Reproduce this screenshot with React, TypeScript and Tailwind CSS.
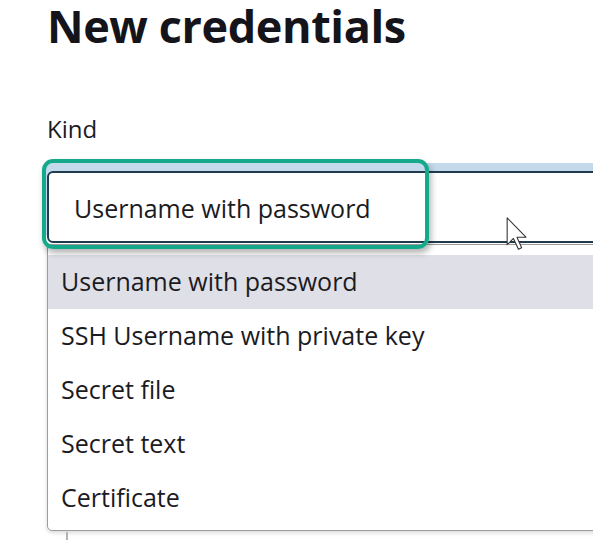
const options = [
  "Username with password",
  "SSH Username with private key",
  "Secret file",
  "Secret text",
  "Certificate",
];

export default function App() {
  return (
    <div
      className="relative h-[540px] w-[593px] overflow-hidden bg-white text-[#1b1b1f]"
      style={{ fontFamily: '"Open Sans", "Noto Sans", sans-serif' }}
    >
      <div className="pl-[47px] pt-[1px]">
        <h1 className="text-[45px] font-bold leading-[1.1] tracking-[-0.4px] text-[#14141a]">
          New credentials
        </h1>
        <label className="mt-[66px] block text-[24px] leading-none">Kind</label>
      </div>

      {/* select */}
      <div className="ml-[47px] mt-[30px] mr-[-20px] flex h-[72px] items-center rounded-[6px] border-2 border-[#213b4e] bg-white pl-[25px] pt-[4px] text-[25px] shadow-[0_-6px_0_2px_#c3d9ec]">
        Username with password
      </div>

      {/* dropdown list */}
      <div className="absolute left-[47px] right-[-10px] top-[244px] h-[287px] rounded-b-[5px] border border-[#9c9c9c] bg-white pt-[10px] shadow-[0_2px_4px_rgba(0,0,0,0.15)]">
        {options.map((o, i) => (
          <div
            key={o}
            className={
              "flex h-[54px] items-center pl-[13px] text-[25px] " +
              (i === 0 ? "bg-[#dfdfe7]" : "")
            }
          >
            {o}
          </div>
        ))}
      </div>
      <div className="absolute left-[66px] top-[532px] h-[8px] w-[2px] bg-[#b4b4b4]" />

      {/* annotation highlight */}
      <div className="absolute left-[42px] top-[159px] h-[90px] w-[387px] rounded-[11px] border-[4px] border-[#15a98b] shadow-[2px_4px_6px_rgba(0,0,0,0.3)]" />

      {/* mouse pointer */}
      <svg
        className="absolute left-[506px] top-[217px]"
        width="22"
        height="34"
        viewBox="0 0 12 19"
      >
        <path
          d="M0.5 0.5 L0.5 15.5 L4 12 L6.8 18 L8.6 17.2 L6 11.3 L11 11.3 Z"
          fill="white"
          stroke="#333"
          strokeWidth="0.6"
          strokeLinejoin="round"
        />
      </svg>
    </div>
  );
}
